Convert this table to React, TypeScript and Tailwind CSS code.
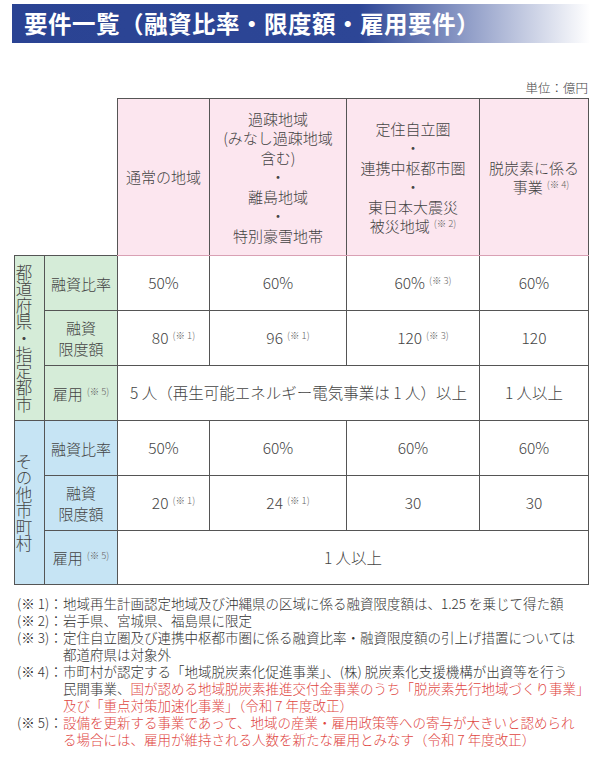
import React from 'react';

// 要件一覧テーブル + 注記

const border = 'border border-[#555]';

function Note({ n }: { n: number }) {
  return (
    <span className="relative -top-[5px] ml-[4px] inline-block text-[9.5px] leading-[10px] text-[#666] whitespace-nowrap">
      (※ {n})
    </span>
  );
}

function HeaderCell({ children }: { children: React.ReactNode }) {
  return (
    <th
      className={`${border} border-b-[#d9a0b4] bg-[#fce6ef] p-0 text-center align-middle text-[15px] font-light leading-[19.5px] text-[#444]`}
    >
      {children}
    </th>
  );
}

function LabelCell({ color, children }: { color: string; children: React.ReactNode }) {
  return (
    <td className={`${border} ${color} p-0 text-center align-middle text-[15px] leading-[21px] text-[#444]`}>
      {children}
    </td>
  );
}

function DataCell({ children, colSpan }: { children: React.ReactNode; colSpan?: number }) {
  return (
    <td
      colSpan={colSpan}
      className={`${border} bg-white p-0 text-center align-middle text-[15.5px] text-[#444]`}
    >
      {children}
    </td>
  );
}

function GroupCell({ color, children }: { color: string; children: React.ReactNode }) {
  return (
    <td rowSpan={3} className={`${border} ${color} p-0 text-center align-middle`}>
      <div className="mx-auto text-[16.5px] leading-[18px] text-[#444] [writing-mode:vertical-rl] [text-orientation:upright]">
        {children}
      </div>
    </td>
  );
}

function Footnote({ n, children }: { n: number; children: React.ReactNode }) {
  return (
    <div className="flex">
      <span className="w-[46px] shrink-0 whitespace-nowrap">(※ {n})：</span>
      <div className="whitespace-nowrap">{children}</div>
    </div>
  );
}

export default function App() {
  const green = 'bg-[#d5ecd8]';
  const blue = 'bg-[#c6e4f4]';

  return (
    <div className="w-[600px] h-[765px] bg-white font-['Noto_Sans_CJK_JP','Noto_Sans',sans-serif] font-light text-[#333]">
      <div className="pt-[4px] pl-[12px] pr-[10px]">
        <div className="flex h-[39px] items-center bg-[linear-gradient(to_right,#2a4393_0%,#2d4696_60%,#ffffff_100%)] pl-[12px]">
          <h1 className="text-[23.5px] font-bold leading-none tracking-[0.5px] text-white">
            要件一覧（融資比率・限度額・雇用要件）
          </h1>
        </div>
      </div>

      <div className="mt-[37px] pr-[12px] text-right text-[12.5px] leading-[15px] text-[#444]">
        単位：億円
      </div>

      <div className="mt-[3px] pl-[14px]">
        <table className="w-[574px] table-fixed border-collapse">
          <colgroup>
            <col className="w-[30px]" />
            <col className="w-[73px]" />
            <col className="w-[92px]" />
            <col className="w-[137px]" />
            <col className="w-[133px]" />
            <col className="w-[109px]" />
          </colgroup>
          <tbody>
            <tr className="h-[157px]">
              <td colSpan={2} className="border-0 p-0" />
              <HeaderCell>通常の地域</HeaderCell>
              <HeaderCell>
                過疎地域
                <br />
                (みなし過疎地域
                <br />
                含む)
                <br />・<br />
                離島地域
                <br />・<br />
                特別豪雪地帯
              </HeaderCell>
              <HeaderCell>
                定住自立圏
                <br />・<br />
                連携中枢都市圏
                <br />・<br />
                東日本大震災
                <br />
                被災地域
                <Note n={2} />
              </HeaderCell>
              <HeaderCell>
                脱炭素に係る
                <br />
                <span className="pl-[14px]">
                  事業
                  <Note n={4} />
                </span>
              </HeaderCell>
            </tr>

            <tr className="h-[55px]">
              <GroupCell color={green}>都道府県・指定都市</GroupCell>
              <LabelCell color={green}>融資比率</LabelCell>
              <DataCell>50%</DataCell>
              <DataCell>60%</DataCell>
              <DataCell>
                <span className="pl-[20px]">
                  60%
                  <Note n={3} />
                </span>
              </DataCell>
              <DataCell>60%</DataCell>
            </tr>
            <tr className="h-[55px]">
              <LabelCell color={green}>
                融資
                <br />
                限度額
              </LabelCell>
              <DataCell>
                <span className="pl-[20px]">
                  80
                  <Note n={1} />
                </span>
              </DataCell>
              <DataCell>
                <span className="pl-[20px]">
                  96
                  <Note n={1} />
                </span>
              </DataCell>
              <DataCell>
                <span className="pl-[20px]">
                  120
                  <Note n={3} />
                </span>
              </DataCell>
              <DataCell>120</DataCell>
            </tr>
            <tr className="h-[55px]">
              <LabelCell color={green}>
                雇用
                <Note n={5} />
              </LabelCell>
              <DataCell colSpan={3}>5 人（再生可能エネルギー電気事業は 1 人）以上</DataCell>
              <DataCell>1 人以上</DataCell>
            </tr>

            <tr className="h-[55px]">
              <GroupCell color={blue}>その他市町村</GroupCell>
              <LabelCell color={blue}>融資比率</LabelCell>
              <DataCell>50%</DataCell>
              <DataCell>60%</DataCell>
              <DataCell>60%</DataCell>
              <DataCell>60%</DataCell>
            </tr>
            <tr className="h-[55px]">
              <LabelCell color={blue}>
                融資
                <br />
                限度額
              </LabelCell>
              <DataCell>
                <span className="pl-[20px]">
                  20
                  <Note n={1} />
                </span>
              </DataCell>
              <DataCell>
                <span className="pl-[20px]">
                  24
                  <Note n={1} />
                </span>
              </DataCell>
              <DataCell>30</DataCell>
              <DataCell>30</DataCell>
            </tr>
            <tr className="h-[54px]">
              <LabelCell color={blue}>
                雇用
                <Note n={5} />
              </LabelCell>
              <DataCell colSpan={4}>1 人以上</DataCell>
            </tr>
          </tbody>
        </table>
      </div>

      <div className="mt-[10px] pl-[17px] text-[13.5px] leading-[17px] text-[#333]">
        <Footnote n={1}>地域再生計画認定地域及び沖縄県の区域に係る融資限度額は、1.25 を乗じて得た額</Footnote>
        <Footnote n={2}>岩手県、宮城県、福島県に限定</Footnote>
        <Footnote n={3}>
          定住自立圏及び連携中枢都市圏に係る融資比率・融資限度額の引上げ措置については
          <br />
          都道府県は対象外
        </Footnote>
        <Footnote n={4}>
          市町村が認定する「地域脱炭素化促進事業」、(株) 脱炭素化支援機構が出資等を行う
          <br />
          民間事業、
          <span className="text-[#e0463f]">国が認める地域脱炭素推進交付金事業のうち「脱炭素先行地域づくり事業」</span>
          <br />
          <span className="text-[#e0463f]">及び「重点対策加速化事業」（令和 7 年度改正）</span>
        </Footnote>
        <Footnote n={5}>
          <span className="text-[#e0463f]">
            設備を更新する事業であって、地域の産業・雇用政策等への寄与が大きいと認められ
            <br />
            る場合には、雇用が維持される人数を新たな雇用とみなす（令和 7 年度改正）
          </span>
        </Footnote>
      </div>
    </div>
  );
}
